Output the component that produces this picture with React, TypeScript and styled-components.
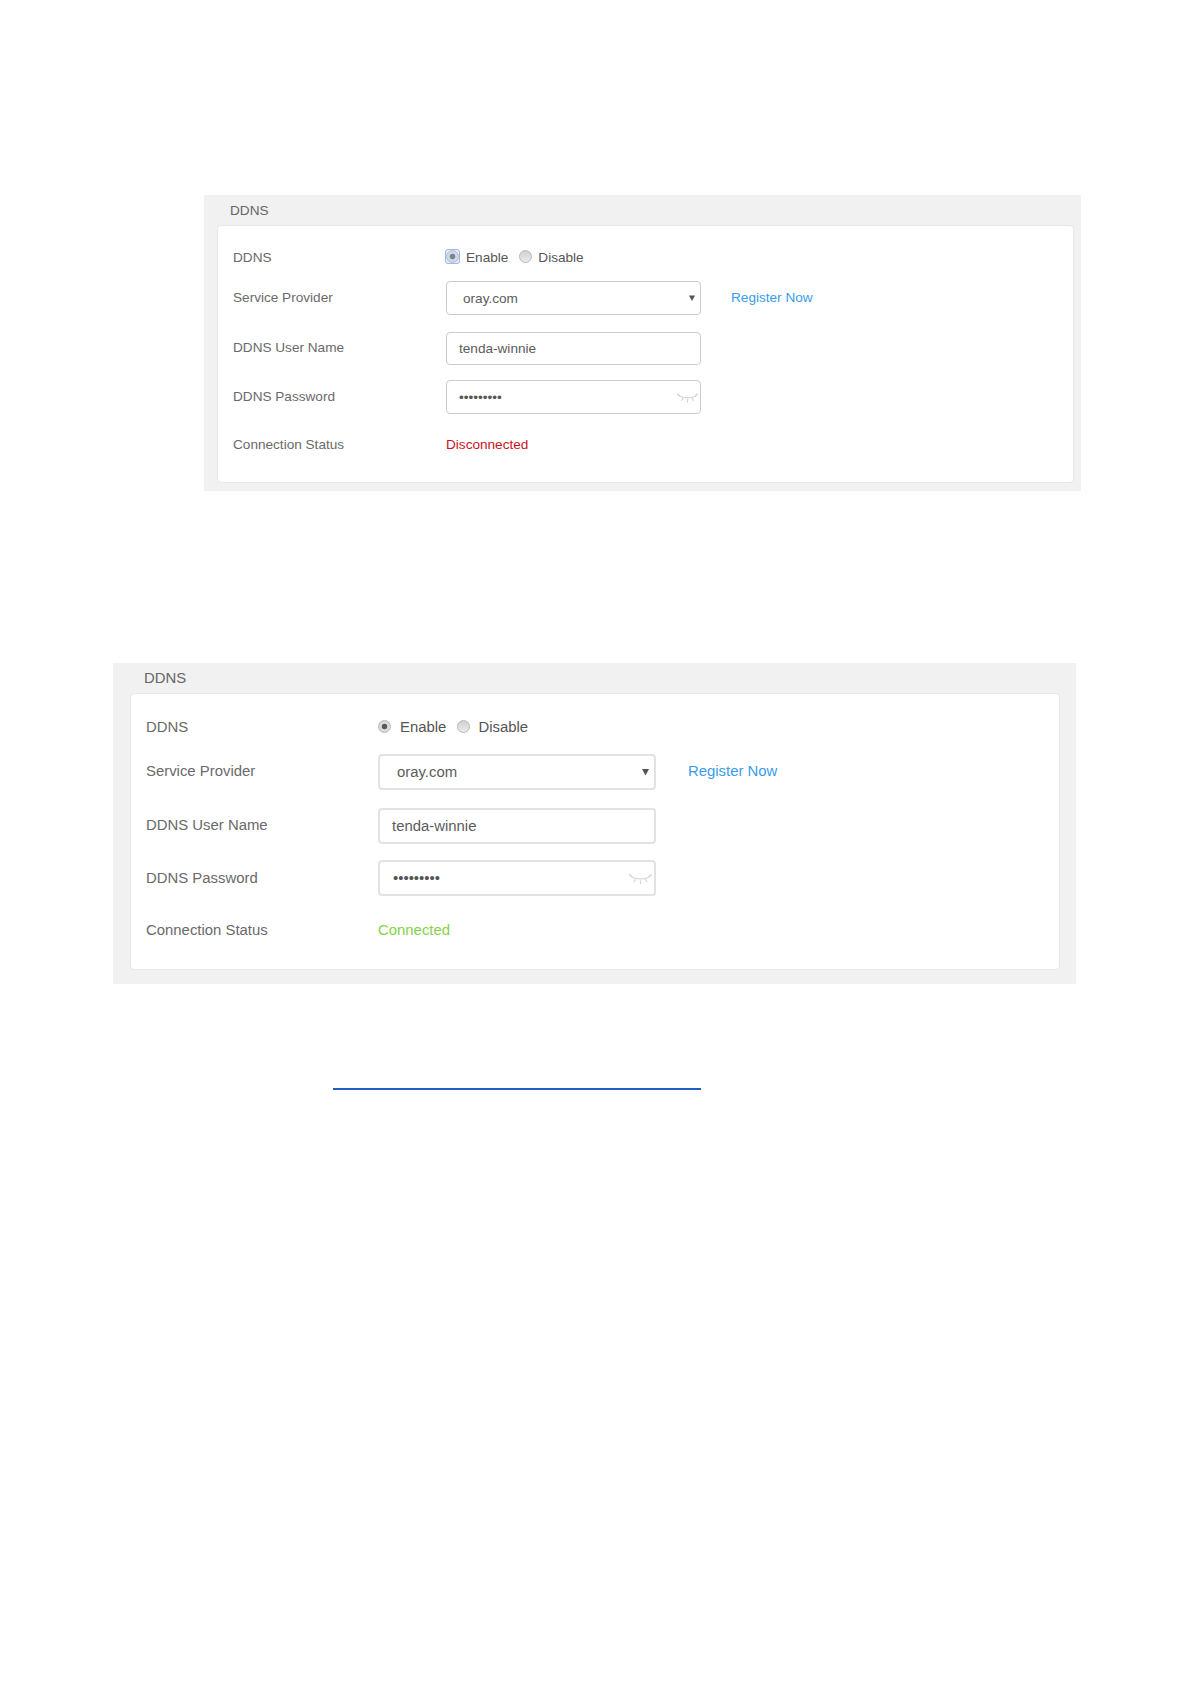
import React from "react";
import styled, { createGlobalStyle } from "styled-components";

const Global = createGlobalStyle`
  html, body { margin: 0; padding: 0; background: #fff; }
  body { font-family: "Liberation Sans", Arial, sans-serif; min-height: 1684px; }
`;

const Page = styled.div`
  display: flex;
  flex-direction: column;
  align-items: flex-start;
  padding-top: 195px;
`;

const Panel = styled.section<{ $left: number; $width: number; $height: number; $top: number; $fs: number }>`
  display: flex;
  flex-direction: column;
  box-sizing: border-box;
  margin-left: ${(p) => p.$left}px;
  margin-top: ${(p) => p.$top}px;
  width: ${(p) => p.$width}px;
  height: ${(p) => p.$height}px;
  background: #f1f1f1;
  font-size: ${(p) => p.$fs}px;
`;

const Title = styled.h2<{ $pad: number; $drop: number }>`
  margin: 0;
  height: 30px;
  flex: none;
  box-sizing: border-box;
  padding-left: ${(p) => p.$pad}px;
  padding-top: ${(p) => p.$drop}px;
  display: flex;
  align-items: center;
  font-size: inherit;
  font-weight: 400;
  color: #666;
`;

const Card = styled.div<{ $ml: number; $mr: number; $mb: number; $pl: number; $pt: number }>`
  flex: 1;
  box-sizing: border-box;
  margin: 0 ${(p) => p.$mr}px ${(p) => p.$mb}px ${(p) => p.$ml}px;
  padding: ${(p) => p.$pt}px 0 0 ${(p) => p.$pl}px;
  background: #fff;
  border: 1px solid #e6e6e6;
  border-radius: 4px;
`;

const Row = styled.div<{ $h: number; $gap: number; $col: number }>`
  display: grid;
  grid-template-columns: ${(p) => p.$col}px 1fr;
  align-items: center;
  height: ${(p) => p.$h}px;
  margin-top: ${(p) => p.$gap}px;
`;

const Label = styled.span<{ $up?: number }>`
  color: #6a6a6a;
  padding-bottom: ${(p) => p.$up ?? 0}px;
`;

const Control = styled.div<{ $fill?: boolean }>`
  display: flex;
  align-items: center;
  height: ${(p) => (p.$fill ? "100%" : "auto")};
`;

const Radio = styled.span<{ $on?: boolean; $focus?: boolean; $gap: number }>`
  position: relative;
  flex: none;
  width: 13px;
  height: 13px;
  margin-bottom: 2px;
  margin-right: ${(p) => p.$gap}px;
  border-radius: 50%;
  box-sizing: border-box;
  border: 1px solid #b8b8b8;
  background: ${(p) =>
    p.$on
      ? "radial-gradient(circle, #5a5a5a 0 2.4px, #dedede 3.2px, #d2d2d2 100%)"
      : "linear-gradient(#d0d0d0, #ececec)"};
  ${(p) =>
    p.$focus
      ? `&::before {
           content: "";
           position: absolute;
           inset: -2px;
           border: 1px solid #9db8ec;
           border-radius: 3px;
           background: rgba(190, 208, 245, 0.35);
         }`
      : ""}
`;

const OptionText = styled.span<{ $after?: number }>`
  color: #555;
  margin-right: ${(p) => p.$after ?? 0}px;
`;

const Field = styled.div<{ $w: number; $thick?: boolean; $pad: number }>`
  position: relative;
  box-sizing: border-box;
  width: ${(p) => p.$w}px;
  height: 100%;
  display: flex;
  align-items: center;
  padding-left: ${(p) => p.$pad}px;
  background: #fff;
  color: #5c5c5c;
  border: ${(p) => (p.$thick ? "2px solid #e2e2e2" : "1px solid #cbcbcb")};
  border-radius: 4px;
`;

const Caret = styled.svg<{ $right: number }>`
  position: absolute;
  right: ${(p) => p.$right}px;
  top: 50%;
  transform: translateY(-50%);
`;

const Eye = styled.svg<{ $right: number }>`
  position: absolute;
  right: ${(p) => p.$right}px;
  top: 50%;
  transform: translateY(-40%);
`;

const Dots = styled.span`
  color: #555;
`;

const Register = styled.a<{ $ml: number }>`
  margin-left: ${(p) => p.$ml}px;
  padding-bottom: 2px;
  color: #3a9cea;
  text-decoration: none;
`;

const Status = styled.span<{ $ok?: boolean }>`
  color: ${(p) => (p.$ok ? "#85d24a" : "#c9141e")};
`;

const BlueRule = styled.div`
  margin: 104px 0 0 333px;
  width: 368px;
  height: 2px;
  background: #1f61c0;
`;

const EyeIcon = ({ w, h, right, color }: { w: number; h: number; right: number; color: string }) => (
  <Eye $right={right} width={w} height={h} viewBox="0 0 24 12" fill="none" stroke={color} strokeWidth="1.2">
    <path d="M1 2 C6 7 18 7 23 2" />
    <path d="M1 1 L4 4 M7 6 L5.5 9 M12 7 L12 11 M17 6 L18.5 9 M23 1 L20 4" />
  </Eye>
);

const CaretIcon = ({ size, right }: { size: number; right: number }) => (
  <Caret $right={right} width={size} height={size} viewBox="0 0 6 6" fill="#555">
    <path d="M0 0.5 H6 L3 6 Z" />
  </Caret>
);

export default function App() {
  return (
    <>
      <Global />
      <Page>
        <Panel $left={204} $top={0} $width={877} $height={296} $fs={13.6}>
          <Title $pad={26} $drop={1}>DDNS</Title>
          <Card $ml={13} $mr={7} $mb={8} $pl={15} $pt={14}>
            <Row $h={34} $gap={0} $col={213}>
              <Label>DDNS</Label>
              <Control>
                <Radio $on $focus $gap={7} />
                <OptionText $after={11}>Enable</OptionText>
                <Radio $gap={6} />
                <OptionText>Disable</OptionText>
              </Control>
            </Row>
            <Row $h={34} $gap={7} $col={213}>
              <Label $up={2}>Service Provider</Label>
              <Control $fill>
                <Field $w={255} $pad={16}>
                  oray.com
                  <CaretIcon size={6} right={5} />
                </Field>
                <Register $ml={30} href="#">Register Now</Register>
              </Control>
            </Row>
            <Row $h={33} $gap={17} $col={213}>
              <Label $up={2}>DDNS User Name</Label>
              <Control $fill>
                <Field $w={255} $pad={12}>tenda-winnie</Field>
              </Control>
            </Row>
            <Row $h={34} $gap={15} $col={213}>
              <Label $up={2}>DDNS Password</Label>
              <Control $fill>
                <Field $w={255} $pad={12}>
                  <Dots>•••••••••</Dots>
                  <EyeIcon w={23} h={11} right={1} color="#d2d2d2" />
                </Field>
              </Control>
            </Row>
            <Row $h={34} $gap={13} $col={213}>
              <Label>Connection Status</Label>
              <Control>
                <Status>Disconnected</Status>
              </Control>
            </Row>
          </Card>
        </Panel>

        <Panel $left={113} $top={172} $width={963} $height={321} $fs={14.9}>
          <Title $pad={31} $drop={0}>DDNS</Title>
          <Card $ml={17} $mr={16} $mb={14} $pl={15} $pt={15}>
            <Row $h={36} $gap={0} $col={232}>
              <Label>DDNS</Label>
              <Control>
                <Radio $on $gap={9} />
                <OptionText $after={11}>Enable</OptionText>
                <Radio $gap={8} />
                <OptionText>Disable</OptionText>
              </Control>
            </Row>
            <Row $h={36} $gap={9} $col={232}>
              <Label $up={2}>Service Provider</Label>
              <Control $fill>
                <Field $thick $w={278} $pad={17}>
                  oray.com
                  <CaretIcon size={7} right={5} />
                </Field>
                <Register $ml={32} href="#">Register Now</Register>
              </Control>
            </Row>
            <Row $h={36} $gap={18} $col={232}>
              <Label $up={2}>DDNS User Name</Label>
              <Control $fill>
                <Field $thick $w={278} $pad={12}>tenda-winnie</Field>
              </Control>
            </Row>
            <Row $h={36} $gap={16} $col={232}>
              <Label>DDNS Password</Label>
              <Control $fill>
                <Field $thick $w={278} $pad={13}>
                  <Dots>•••••••••</Dots>
                  <EyeIcon w={25} h={12} right={1} color="#d8d8d8" />
                </Field>
              </Control>
            </Row>
            <Row $h={36} $gap={16} $col={232}>
              <Label>Connection Status</Label>
              <Control>
                <Status $ok>Connected</Status>
              </Control>
            </Row>
          </Card>
        </Panel>

        <BlueRule />
      </Page>
    </>
  );
}
